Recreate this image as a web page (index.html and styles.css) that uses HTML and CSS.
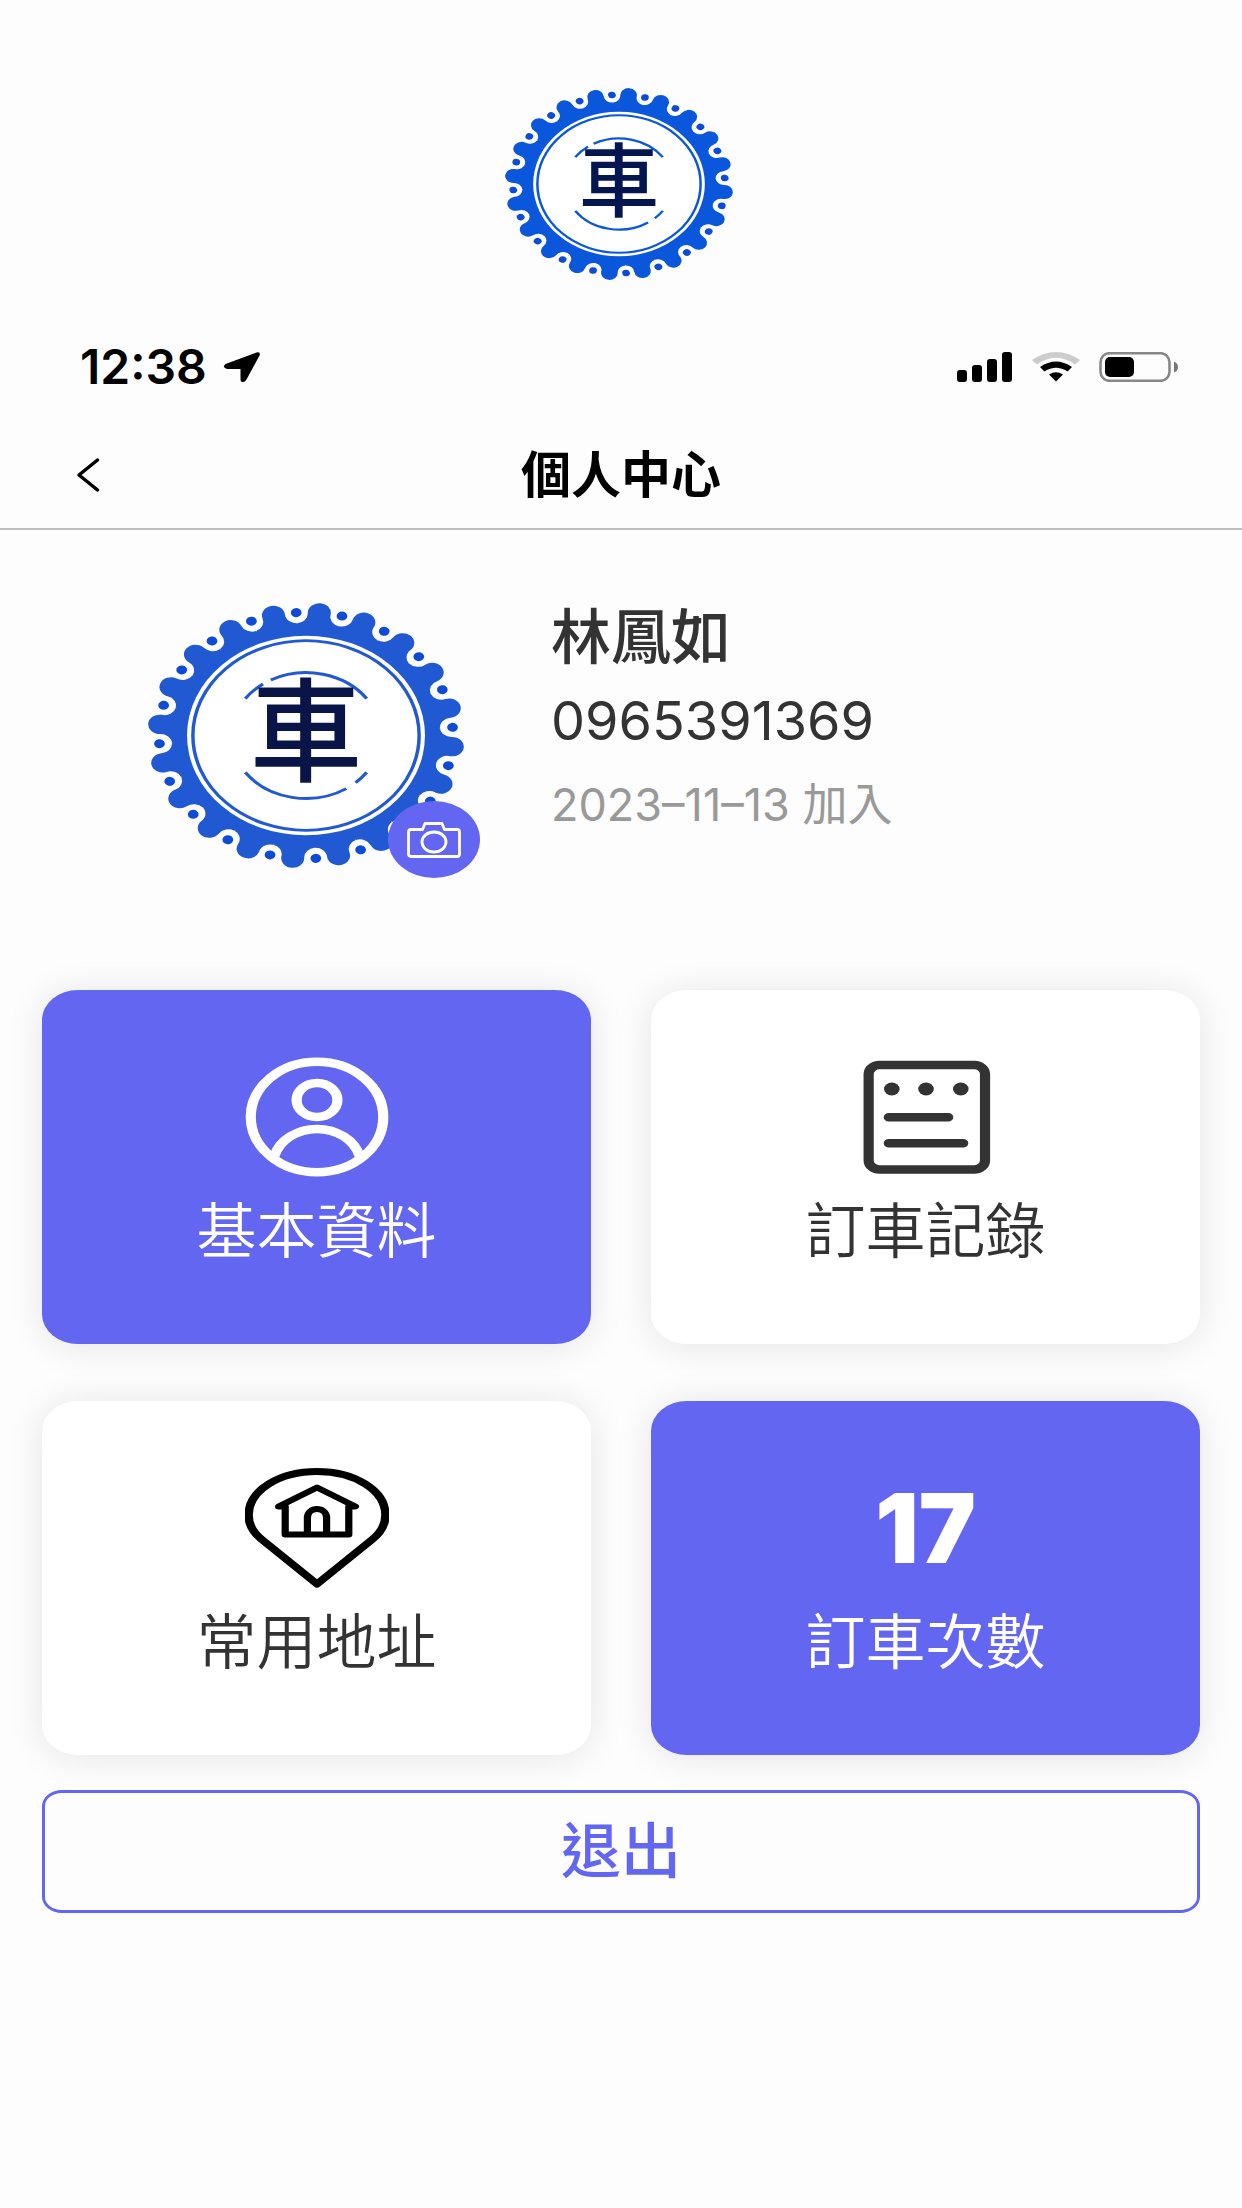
FILE: index.html
```html
<!DOCTYPE html>
<html lang="zh-Hant">
<head>
<meta charset="utf-8">
<meta name="viewport" content="width=device-width, initial-scale=1">
<title>個人中心</title>
<link rel="stylesheet" href="styles.css">
</head>
<body>
<svg class="defs" aria-hidden="true">
  <defs>
    <g id="tooth">
      <path d="M0-60L-13.3-83.95A7.3 7.3 0 0 0-7.26-92.2A7.3 7.3 0 1 1 7.26-92.2A7.3 7.3 0 0 0 13.3-83.95Z"/>
      <circle class="gear-dot" cx="14.5" cy="-91.8" r="3.4"/>
    </g>
    <g id="teeth5">
      <use href="#tooth"/>
      <use href="#tooth" transform="rotate(18)"/>
      <use href="#tooth" transform="rotate(36)"/>
      <use href="#tooth" transform="rotate(54)"/>
      <use href="#tooth" transform="rotate(72)"/>
    </g>
    <symbol id="gear" viewBox="-100 -100 200 200" preserveAspectRatio="none">
      <g transform="rotate(5.2)" fill="currentColor">
        <circle r="84.6"/>
        <use href="#teeth5"/>
        <use href="#teeth5" transform="rotate(90)"/>
        <use href="#teeth5" transform="rotate(180)"/>
        <use href="#teeth5" transform="rotate(270)"/>
      </g>
      <circle r="75.3" fill="#fff"/>
      <g fill="none" stroke="currentColor" stroke-width="2.2">
        <circle r="71.6"/>
        <path d="M-38.4-27.9A47.5 47.5 0 0 1-27.2-38.9M-22.3-41.9A47.5 47.5 0 0 1 38.4-27.9M-38.4 27.9A47.5 47.5 0 0 0 25.5 40.1M31.4 35.6A47.5 47.5 0 0 0 38.4 27.9"/>
      </g>
    </symbol>
  </defs>
</svg>

<header class="brand">
  <div class="logo">
    <svg class="logo-gear" aria-hidden="true"><use href="#gear"/></svg>
    <span class="logo-char">車</span>
  </div>
</header>

<div class="status">
  <div class="status-left">
    <span class="time">12:38</span>
    <svg width="38" height="32" viewBox="0 0 38 32" aria-hidden="true"><path d="M2.500 13L33.500 1.500Q38 .5 36.500 4.500L23.500 28.500Q22 31.500 19 31Q17.500 30.500 17.500 28.500V18H4Q-1.500 16.500 2.500 13Z"/></svg>
  </div>
  <div class="status-right">
    <svg width="56" height="30" viewBox="0 0 56 30" aria-hidden="true"><rect y="18" width="10" height="12" rx="3"/><rect x="15" y="13" width="10" height="17" rx="3"/><rect x="30" y="7" width="10" height="23" rx="3"/><rect x="45" width="10" height="30" rx="3"/></svg>
    <svg width="48" height="30" viewBox="0 0 48 30" aria-hidden="true"><path fill="#ccc" d="M0 8Q24-8 48 8L43 12.500Q24-1 5 12.500Z"/><path d="M8 15Q24 4 40 15L35.500 19.500Q24 12 12.500 19.500Z"/><path d="M17 22.500Q24 18 31 22.500L24 29.500Z"/></svg>
    <svg width="80" height="30" viewBox="0 0 80 30" aria-hidden="true"><rect x="1.500" y="1.200" width="69" height="27.600" rx="9" fill="none" stroke="#888" stroke-width="2.600"/><rect x="6" y="5" width="29" height="20" rx="5"/><path fill="#777" d="M75 9.500Q79 11 79 15T75 20.500Z"/></svg>
  </div>
</div>

<nav class="nav">
  <button class="back" type="button" aria-label="返回">
    <svg width="24" height="36" viewBox="0 0 24 36" aria-hidden="true"><path d="M21.500 3L3 18L21.500 33" fill="none" stroke="currentColor" stroke-width="3.500" stroke-linecap="round" stroke-linejoin="round"/></svg>
  </button>
  <h1 class="title">個人中心</h1>
</nav>

<main>
  <section class="profile">
    <div class="logo avatar">
      <svg class="logo-gear" aria-hidden="true"><use href="#gear"/></svg>
      <span class="logo-char">車</span>
      <button class="camera" type="button" aria-label="更換頭像">
        <svg width="54" height="36" viewBox="0 0 54 36" fill="none" stroke="currentColor" stroke-width="2.800" aria-hidden="true"><path d="M4 7.500H15.500L18 1.500H35L37.500 7.500H50Q52.500 7.500 52.500 10V32Q52.500 34.500 50 34.500H4Q1.500 34.500 1.500 32V10Q1.500 7.500 4 7.500Z" stroke-linejoin="round"/><ellipse cx="27" cy="20" rx="12" ry="10"/></svg>
      </button>
    </div>
    <div class="info">
      <h2 class="name">林鳳如</h2>
      <p class="phone">0965391369</p>
      <p class="joined">2023–11–13 加入</p>
    </div>
  </section>

  <section class="cards">
    <a class="card card-accent" href="#profile">
      <svg class="card-icon" viewBox="0 0 120 120" preserveAspectRatio="none" fill="none" stroke="currentColor" stroke-width="8.500" aria-hidden="true"><circle cx="60" cy="60" r="55.200"/><circle cx="60" cy="43" r="17"/><path d="M24.500 99A36.800 36.800 0 0 1 95.500 99"/></svg>
      <span class="label">基本資料</span>
    </a>
    <a class="card" href="#orders">
      <svg class="card-icon" viewBox="0 0 120 120" preserveAspectRatio="none" aria-hidden="true"><g fill="none" stroke="currentColor" stroke-width="8.500" stroke-linecap="round"><rect x="12.200" y="8" width="97" height="104.500" rx="9"/><path d="M29 60.300H78.500M29 86.300H91"/></g><g fill="currentColor"><circle cx="31.500" cy="32" r="6.500"/><circle cx="60" cy="32" r="6.500"/><circle cx="89" cy="32" r="6.500"/></g></svg>
      <span class="label">訂車記錄</span>
    </a>
    <a class="card" href="#addresses">
      <svg class="card-icon icon-black" viewBox="0 0 120 120" preserveAspectRatio="none" fill="none" stroke="currentColor" stroke-linejoin="round" stroke-linecap="round" aria-hidden="true"><path stroke-width="7" d="M60 116L14.500 72C7 65 3 56 3 47C3 22 29 3.500 60 3.500S117 22 117 47C117 56 113 65 105.500 72Z"/><path stroke-width="6" d="M33.500 38.500H28L60 19.500L92 38.500H86.500V66.500H33.500ZM52 66V50C52 38 68 38 68 50V66"/></svg>
      <span class="label">常用地址</span>
    </a>
    <div class="card card-accent">
      <strong class="count">17</strong>
      <span class="label">訂車次數</span>
    </div>
  </section>

  <button class="logout" type="button">退出</button>
</main>
</body>
</html>
```
FILE: styles.css
```css
* {
  box-sizing: border-box;
}

body {
  margin: 0;
  min-height: 100vh;
  background: #fdfdfd;
  color: #333;
  font-family: Inter, "Noto Sans CJK TC", sans-serif;
}

h1, h2, p {
  margin: 0;
}

button {
  padding: 0;
  border: 0;
  background: none;
  color: inherit;
  font: inherit;
  cursor: pointer;
}

svg {
  display: block;
}

.defs {
  position: absolute;
  width: 0;
  height: 0;
}

/* Gear logo with the character centred on it */
.brand {
  display: flex;
  justify-content: center;
  padding: 88px 4px 0 0;
}

.logo {
  display: grid;
  place-items: center;
  width: 228px;
  height: 192px;
  color: #0b57db;
}

.logo-gear,
.logo-char {
  grid-area: 1 / 1;
}

.logo-gear {
  width: 100%;
  height: 100%;
}

.gear-dot {
  fill: #0d4ad6;
}

.logo-char {
  padding-bottom: 6px;
  color: #04164f;
  font-size: 80px;
  font-weight: 500;
  line-height: 1;
}

/* Phone status bar */
.status {
  display: flex;
  justify-content: space-between;
  align-items: center;
  height: 60px;
  margin-top: 57px;
  padding: 0 63px 0 80px;
  color: #000;
}

.status-left {
  display: flex;
  align-items: center;
  gap: 16px;
}

.status-right {
  display: flex;
  align-items: center;
  gap: 19px;
}

.time {
  font-size: 48px;
  font-weight: 600;
  line-height: 60px;
}

/* Page bar */
.nav {
  display: grid;
  grid-template-columns: 1fr auto 1fr;
  align-items: center;
  margin-top: 33px;
  padding: 0 64px 8px;
  border-bottom: 2px solid #bdbdbd;
  color: #000;
}

.back {
  justify-self: start;
  padding: 12px;
}

.title {
  font-size: 50px;
  font-weight: 700;
  line-height: 90px;
}

/* Profile summary */
.profile {
  display: flex;
  align-items: flex-start;
  gap: 87px;
  padding: 65px 42px 0 148px;
}

.avatar {
  position: relative;
  flex: none;
  width: 316px;
  height: 265px;
  margin-top: 8px;
  color: #2159d3;
}

.avatar .gear-dot {
  fill: #0d20c4;
}

.avatar .logo-char {
  padding-bottom: 8px;
  color: #0a1547;
  font-size: 112px;
}

.camera {
  position: absolute;
  right: -16px;
  bottom: -10px;
  display: grid;
  place-items: center;
  width: 92px;
  height: 77px;
  border-radius: 50%;
  background: #6366f1;
  color: #fff;
}

.name,
.phone,
.joined {
  line-height: 84px;
}

.name {
  font-size: 60px;
  font-weight: 500;
}

.phone {
  font-size: 54px;
}

.joined {
  color: #999;
  font-size: 45px;
}

/* Menu cards */
.cards {
  display: grid;
  grid-template-columns: 1fr 1fr;
  gap: 57px 60px;
  padding: 122px 42px 0;
}

.card {
  display: flex;
  flex-direction: column;
  align-items: center;
  gap: 14px;
  padding: 67px 20px 73px;
  border-radius: 36px / 30px;
  background: #fff;
  box-shadow: 0 2px 36px rgba(0, 0, 0, 0.1);
  color: #333;
  text-decoration: none;
}

.card-accent {
  background: #6366f1;
  color: #fff;
}

.card-icon {
  width: 144px;
  height: 120px;
}

.icon-black {
  color: #000;
}

.label {
  font-size: 60px;
  font-weight: 350;
  line-height: 80px;
}

.count {
  font-size: 96px;
  font-weight: 900;
  line-height: 120px;
}

.logout {
  display: block;
  width: calc(100% - 84px);
  margin: 35px 42px 0;
  border: 3px solid #6366f1;
  border-radius: 20px / 16px;
  color: #6366f1;
  font-size: 60px;
  font-weight: 500;
  line-height: 117px;
}
```
